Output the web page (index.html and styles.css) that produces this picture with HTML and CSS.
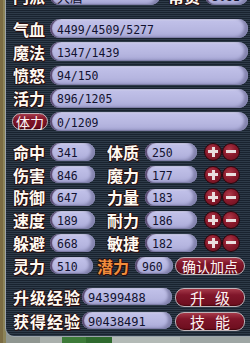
FILE: index.html
```html
<!DOCTYPE html>
<html lang="zh">
<head>
<meta charset="utf-8">
<link rel="stylesheet" href="styles.css">
</head>
<body>
<div class="panel">
  <div class="row top">
    <span class="lbl">门派</span>
    <span class="pill cjk w-sect">大唐</span>
    <span class="lbl lbl2">帮贡</span>
    <span class="pill grow">3081</span>
  </div>

  <div class="bars">
    <div class="row"><span class="lbl">气血</span><span class="pill grow">4499/4509/5277</span></div>
    <div class="row"><span class="lbl">魔法</span><span class="pill grow">1347/1439</span></div>
    <div class="row"><span class="lbl">愤怒</span><span class="pill grow">94/150</span></div>
    <div class="row"><span class="lbl">活力</span><span class="pill grow">896/1205</span></div>
    <div class="row"><span class="lbl"><span class="btn btn-stamina">体力</span></span><span class="pill grow">0/1209</span></div>
  </div>

  <div class="stats">
    <div class="row">
      <span class="lbl">命中</span><span class="pill w-a">341</span>
      <span class="lbl lbl2">体质</span><span class="pill w-b">250</span>
      <span class="rb plus"></span><span class="rb minus"></span>
    </div>
    <div class="row">
      <span class="lbl">伤害</span><span class="pill w-a">846</span>
      <span class="lbl lbl2">魔力</span><span class="pill w-b">177</span>
      <span class="rb plus"></span><span class="rb minus"></span>
    </div>
    <div class="row">
      <span class="lbl">防御</span><span class="pill w-a">647</span>
      <span class="lbl lbl2">力量</span><span class="pill w-b">183</span>
      <span class="rb plus"></span><span class="rb minus"></span>
    </div>
    <div class="row">
      <span class="lbl">速度</span><span class="pill w-a">189</span>
      <span class="lbl lbl2">耐力</span><span class="pill w-b">186</span>
      <span class="rb plus"></span><span class="rb minus"></span>
    </div>
    <div class="row">
      <span class="lbl">躲避</span><span class="pill w-a">668</span>
      <span class="lbl lbl2">敏捷</span><span class="pill w-b">182</span>
      <span class="rb plus"></span><span class="rb minus"></span>
    </div>
    <div class="row">
      <span class="lbl">灵力</span><span class="pill w-c">510</span>
      <span class="lbl lbl-pot">潜力</span><span class="pill w-d">960</span>
      <span class="btn btn-confirm">确认加点</span>
    </div>
  </div>

  <div class="exp">
    <div class="row">
      <span class="lbl lbl-exp">升级经验</span><span class="pill w-e">94399488</span>
      <span class="btn btn-exp">升级</span>
    </div>
    <div class="row">
      <span class="lbl lbl-exp">获得经验</span><span class="pill w-e">90438491</span>
      <span class="btn btn-exp">技能</span>
    </div>
  </div>
</div>
</body>
</html>
```

FILE: styles.css
```css
html, body {
  margin: 0;
  padding: 0;
}
body {
  width: 250px;
  height: 343px;
  overflow: hidden;
  background:
    linear-gradient(90deg, #7b6c43 0 3px, #8c8458 3px 6px, transparent 6px),
    linear-gradient(90deg, #8f9690 0 40px, #aab0ac 40px 62px, #3d7b39 62px 86px, #2f6a2e 86px 112px, #b3bab6 112px 180px, #9ea6a4 180px);
}

.panel {
  box-sizing: border-box;
  width: 245px;
  margin: -14px 0 0 5px;
  padding: 0 2px 5px 7px;
  border-left: 1px solid #9ba3aa;
  border-bottom: 1px solid #9ba3aa;
  border-bottom-left-radius: 9px;
  background: repeating-linear-gradient(to bottom, #19232f 0 1px, #2e3b49 1px 2px);
}

.row {
  display: flex;
  align-items: center;
}

.top { height: 19px; }

.lbl {
  flex: none;
  width: 37px;
  font-family: "Noto Sans CJK SC", sans-serif;
  font-weight: 700;
  font-size: 16px;
  line-height: 1;
  color: #fffaf2;
  text-shadow: 1px 1px 0 #2a0e0e, -1px 0 0 #2a0e0e, 1px 0 0 #2a0e0e, 0 1px 0 #2a0e0e, 0 -1px 0 #2a0e0e;
  white-space: nowrap;
}
.lbl2 { width: 32px; margin-left: 12px; }
.top .lbl2 { margin-left: 8px; }
.lbl-pot { width: 36px; margin-left: 4px; color: #f28d3c; }
.lbl-exp { width: 69px; letter-spacing: 1px; }

.pill {
  box-sizing: border-box;
  flex: none;
  height: 100%;
  display: flex;
  align-items: center;
  padding: 2px 0 0 7px;
  border-radius: 10px;
  background: linear-gradient(to bottom, #dcdcf4 0, #c0c0e8 2px, #b6b6e0 60%, #a8a8d6 100%);
  box-shadow: inset -4px -1px 3px #8484ae, inset 2px 0 1px #55466c, inset 0 -1px 0 #7c7ca4;
  font-family: "DejaVu Sans Mono", monospace;
  font-size: 11.5px;
  color: #121230;
  white-space: nowrap;
}
.grow { flex: 1; }
.cjk { font-family: "Noto Sans CJK SC", sans-serif; font-size: 13px; }
.w-sect { width: 110px; }
.top .pill.grow { margin-left: 5px; }
.w-a { width: 45px; }
.w-b { width: 52px; margin-left: 6px; }
.w-c { width: 43px; }
.w-d { width: 38px; margin-left: 2px; }
.w-e { width: 90px; font-size: 12px; padding-left: 6px; }

.bars {
  display: flex;
  flex-direction: column;
  gap: 4.25px;
  margin-top: 14px;
}
.bars .row { height: 19px; }

.stats {
  display: flex;
  flex-direction: column;
  gap: 5.3px;
  margin-top: 12px;
}
.stats .row { height: 17.5px; }

.exp {
  display: flex;
  flex-direction: column;
  gap: 5px;
  margin-top: 13.5px;
}
.exp .row { height: 19px; }
.exp .pill { height: 17.5px; align-self: flex-start; }

.btn {
  box-sizing: border-box;
  flex: none;
  display: flex;
  align-items: center;
  justify-content: center;
  border: 1px solid #bfb3b8;
  border-radius: 9px;
  background: linear-gradient(to bottom, #a63a4a 0, #80162a 35%, #6c0e1e 100%);
  box-shadow: inset 0 -1px 1px #4a0610;
  color: #fbf4f4;
  font-family: "Noto Sans CJK SC", sans-serif;
  font-size: 14px;
  line-height: 1;
  text-shadow: none;
  font-weight: 400;
}
.btn-stamina {
  width: 36px;
  height: 17px;
  margin-left: -1px;
  font-size: 14px;
}
.btn-confirm {
  width: 70px;
  height: 18px;
  margin-left: 2px;
}
.btn-exp {
  width: 70px;
  height: 19px;
  margin-left: 3px;
  letter-spacing: 10px;
  padding-left: 10px;
  font-size: 15px;
}

.rb {
  position: relative;
  flex: none;
  width: 18px;
  height: 18px;
  border-radius: 50%;
  box-sizing: border-box;
  border: 1px solid #2a060c;
  background: radial-gradient(circle at 40% 35%, #b03a4a 0, #8a1a2c 45%, #68101e 100%);
}
.plus { margin-left: 7px; }
.minus { margin-left: 0; }
.rb::before, .plus::after {
  content: "";
  position: absolute;
  background: #eadede;
  left: 3px;
  right: 3px;
  top: 6.5px;
  height: 3px;
}
.plus::after {
  left: 6.5px;
  width: 3px;
  right: auto;
  top: 3px;
  height: 10px;
}
```
